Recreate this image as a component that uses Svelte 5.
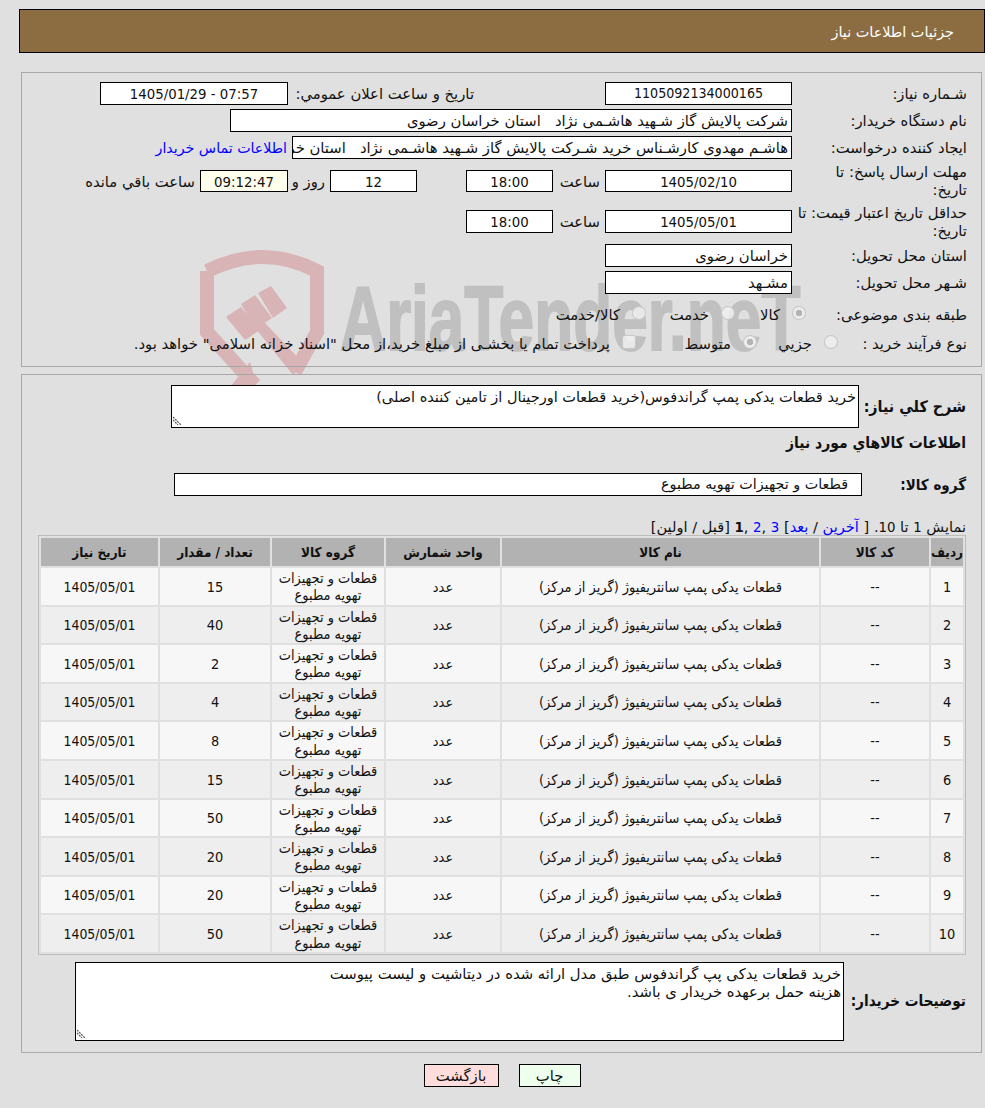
<script>
	const rows = Array.from({ length: 10 }, (_, i) => ({
		n: i + 1,
		qty: [15, 40, 2, 4, 8, 15, 50, 20, 20, 50][i]
	}));
</script>

<div class="page">
	<div class="watermark" aria-hidden="true">
		<svg class="shield" viewBox="0 0 126 137" width="126" height="137">
			<path class="band" d="M7 21 Q36 7 62 7 Q90 7 117 21 V82 L95 122 M7 21 V82 L55 135" />
			<path d="M26 67 L41 57 L60 80 L45 90 Z M58 43 L71 36 L87 58 L73 68 Z M41 54 L55 45 L72 68 L65 73 L105 115 L93 125 L55 78 Z M50 112 L57 137 L30 137 Z" />
		</svg>
		<span class="mark">AriaTender.neT</span>
	</div>

	<header class="title">جزئیات اطلاعات نیاز</header>

	<section class="panel top">
		<div class="row">
			<span class="label">شـماره نیاز:</span>
			<span class="box num digits long">1105092134000165</span>
			<span class="label second">تاریخ و ساعت اعلان عمومي:</span>
			<span class="box stamp digits">07:57 - 1405/01/29</span>
		</div>
		<div class="row">
			<span class="label">نام دستگاه خریدار:</span>
			<span class="box left wide1">شرکت پالایش گاز شـهید هاشـمی نژاد &nbsp; استان خراسان رضوی</span>
		</div>
		<div class="row">
			<span class="label">ایجاد کننده درخواست:</span>
			<span class="box left wide2">هاشـم مهدوی کارشـناس خرید شـرکت پالایش گاز شـهید هاشـمی نژاد &nbsp; استان خراسان رضوی</span>
			<a class="link" href="#contact">اطلاعات تماس خریدار</a>
		</div>
		<div class="row r4">
			<span class="label">مهلت ارسال پاسخ: تا<br />تاریخ:</span>
			<span class="box num digits">1405/02/10</span>
			<span class="unit hour">ساعت</span>
			<span class="box short digits">18:00</span>
			<span class="box days digits">12</span>
			<span class="unit and">روز و</span>
			<span class="box short clock digits">09:12:47</span>
			<span class="unit">ساعت باقي مانده</span>
		</div>
		<div class="row r5">
			<span class="label">حداقل تاریخ اعتبار قیمت: تا تاریخ:</span>
			<span class="box num digits">1405/05/01</span>
			<span class="unit hour">ساعت</span>
			<span class="box short digits">18:00</span>
		</div>
		<div class="row">
			<span class="label">استان محل تحویل:</span>
			<span class="box num left">خراسان رضوی</span>
		</div>
		<div class="row">
			<span class="label">شـهر محل تحویل:</span>
			<span class="box num left">مشـهد</span>
		</div>
		<div class="row r8">
			<span class="label l8">طبقه بندی موضوعی:</span>
			<span class="radio on"></span><span class="opt w57">کالا</span>
			<span class="radio"></span><span class="opt w75">خدمت</span>
			<span class="radio"></span><span class="opt">کالا/خدمت</span>
		</div>
		<div class="row r9">
			<span class="label l9">نوع فرآیند خرید :</span>
			<span class="radio"></span><span class="opt w67">جزيي</span>
			<span class="radio on"></span><span class="opt w107">متوسط</span>
			<span class="check"></span><span class="opt">پرداخت تمام یا بخشـی از مبلغ خرید،از محل "اسناد خزانه اسلامی" خواهد بود.</span>
		</div>
	</section>

	<section class="panel bottom">
		<div class="need">
			<b class="head">شرح كلي نياز:</b>
			<div class="area need-area">
				خرید قطعات یدکی پمپ گراندفوس(خرید قطعات اورجینال از تامین کننده اصلی)
				<svg class="grip" viewBox="0 0 9 9" width="9" height="9"><path d="M0 1 L8 9 M0 4 L5 9" /></svg>
			</div>
		</div>
		<b class="head goods">اطلاعات كالاهاي مورد نياز</b>
		<div class="group">
			<b class="head">گروه کالا:</b>
			<span class="box group-box">قطعات و تجهیزات تهویه مطبوع</span>
		</div>
		<div class="pager">
			نمایش <span class="digits">1</span> تا <span class="digits">10</span>. [ <a href="#last">آخرین</a> / <a href="#next">بعد</a>] <a class="digits" href="#p3">3</a> ,<a class="digits" href="#p2">2</a> ,<b class="digits">1</b> [قبل / اولین]
		</div>
		<table>
			<thead>
				<tr>
					<th class="c-n">ردیف</th>
					<th class="c-code">کد کالا</th>
					<th class="c-name">نام کالا</th>
					<th class="c-unit">واحد شمارش</th>
					<th class="c-group">گروه کالا</th>
					<th class="c-qty">تعداد / مقدار</th>
					<th>تاریخ نیاز</th>
				</tr>
			</thead>
			<tbody>
				{#each rows as row}
					<tr>
						<td>{row.n}</td>
						<td>--</td>
						<td>قطعات یدکی پمپ سانتریفیوژ (گریز از مرکز)</td>
						<td>عدد</td>
						<td>قطعات و تجهیزات<br />تهویه مطبوع</td>
						<td>{row.qty}</td>
						<td class="date">1405/05/01</td>
					</tr>
				{/each}
			</tbody>
		</table>
		<div class="notes">
			<b class="head">توضیحات خریدار:</b>
			<div class="area notes-area">
				خرید قطعات یدکی پپ گراندفوس طبق مدل ارائه شده در دیتاشیت و لیست پیوست<br />هزینه حمل برعهده خریدار ی باشد.
				<svg class="grip" viewBox="0 0 9 9" width="9" height="9"><path d="M0 1 L8 9 M0 4 L5 9" /></svg>
			</div>
		</div>
	</section>

	<div class="actions">
		<button class="print">چاپ</button>
		<button class="back">بازگشت</button>
	</div>
</div>

<style>
	:global(body) {
		background: #e0e0e0;
	}
	.page {
		direction: rtl;
		position: relative;
		height: 1108px;
		box-sizing: border-box;
		padding: 9px 0 0 0;
		overflow: hidden;
		font-family: "DejaVu Sans", sans-serif;
		font-size: 14.8px;
		color: #111;
	}
	.digits {
		font-family: "DejaVu Sans Condensed", "DejaVu Sans", sans-serif;
		font-size: 14.8px;
	}
	.long {
		font-size: 14.1px;
	}
	.watermark {
		position: absolute;
		left: 200px;
		top: 250px;
		width: 720px;
		height: 137px;
		direction: ltr;
	}
	.shield {
		position: absolute;
		left: 0;
		top: 0;
		fill: #d9b4b6;
	}
	.band {
		fill: none;
		stroke: #d9b4b6;
		stroke-width: 14;
	}
	.mark {
		position: absolute;
		left: 140px;
		top: 19px;
		font-family: "Liberation Sans", sans-serif;
		font-weight: bold;
		font-size: 90px;
		line-height: 100px;
		color: #c0c0c0;
		-webkit-text-stroke: 2px #c0c0c0;
		white-space: nowrap;
		transform: scaleX(0.71);
		transform-origin: left center;
	}
	.title {
		position: relative;
		margin-left: 19px;
		height: 42px;
		line-height: 44px;
		background: #8c6d42;
		border: 1px solid #000;
		color: #fff;
		padding-right: 30px;
		font-size: 14.4px;
	}
	.panel {
		position: relative;
		margin: 0 3px 0 21px;
		border: 1px solid #a8a8a8;
		box-sizing: border-box;
	}
	.top {
		margin-top: 19px;
		height: 295px;
		padding: 9px 14px 0 0;
	}
	.bottom {
		margin-top: 7px;
		height: 679px;
		padding: 10px 15px 0 15px;
	}
	.row {
		display: flex;
		align-items: center;
		height: 23px;
		margin-bottom: 4px;
	}
	.r4 {
		height: 22px;
		margin-top: 11px;
		margin-bottom: 18px;
	}
	.r5 {
		margin-bottom: 11px;
	}
	.r8 {
		margin-top: 9px;
		margin-bottom: 6px;
	}
	.label {
		flex: none;
		width: 175px;
		line-height: 18px;
	}
	.l8 {
		width: 161px;
	}
	.l9 {
		width: 129px;
	}
	.second {
		width: 186px;
		margin-right: 131px;
	}
	.box {
		flex: none;
		box-sizing: border-box;
		height: 100%;
		line-height: 21px;
		background: #fff;
		border: 1px solid #000;
		text-align: center;
		overflow: hidden;
		white-space: nowrap;
	}
	.num {
		width: 187px;
	}
	.stamp {
		width: 188px;
	}
	.left {
		text-align: right;
		padding-right: 3px;
	}
	.wide1 {
		width: 562px;
	}
	.wide2 {
		width: 500px;
	}
	.link {
		margin-right: 5px;
		color: #00f;
		text-decoration: none;
		white-space: nowrap;
		font-size: 14.2px;
	}
	.unit {
		flex: none;
		box-sizing: border-box;
		padding: 0 5px;
		white-space: nowrap;
	}
	.hour {
		width: 52px;
	}
	.and {
		width: 42px;
	}
	.short {
		width: 87px;
	}
	.days {
		width: 87px;
		margin-right: 49px;
	}
	.clock {
		width: 88px;
		background: #ffe;
	}
	.radio,
	.check {
		flex: none;
		box-sizing: border-box;
		width: 14px;
		height: 14px;
		margin-top: -4px;
		border-radius: 50%;
		border: 1px solid rgba(190, 190, 190, 0.8);
		background: rgba(238, 238, 238, 0.85);
	}
	.radio.on {
		background: radial-gradient(circle, #b4b4b4 0 3px, #ececec 3.5px);
	}
	.check {
		border-radius: 3px;
	}
	.opt {
		flex: none;
		box-sizing: border-box;
		padding-right: 12px;
		white-space: nowrap;
	}
	.w57 {
		width: 57px;
	}
	.w75 {
		width: 75px;
	}
	.w67 {
		width: 67px;
	}
	.w107 {
		width: 107px;
	}
	.head {
		flex: none;
		font-family: "DejaVu Sans Condensed", "DejaVu Sans", sans-serif;
		font-size: 15.5px;
		white-space: nowrap;
	}
	.need {
		display: flex;
		align-items: center;
		gap: 5px;
		height: 43px;
	}
	.need .head {
		width: 102px;
		font-size: 15.9px;
	}
	.area {
		position: relative;
		box-sizing: border-box;
		background: #fff;
		border: 1px solid #000;
		padding: 2px;
		line-height: 18px;
	}
	.grip {
		position: absolute;
		left: 1px;
		bottom: 2px;
		fill: none;
		stroke: #555;
		stroke-width: 1.3;
		stroke-dasharray: 2 1;
	}
	.need-area {
		width: 688px;
		height: 43px;
		font-size: 14.5px;
	}
	.goods {
		display: block;
		margin-top: 3px;
		height: 24px;
		line-height: 24px;
	}
	.group {
		display: flex;
		align-items: center;
		height: 23px;
		margin-top: 18px;
	}
	.group .head {
		width: 104px;
		font-size: 15px;
	}
	.group-box {
		width: 688px;
		text-align: right;
		padding-right: 13px;
		font-size: 14.3px;
	}
	.pager {
		margin-top: 22px;
		height: 17px;
		line-height: 17px;
		font-size: 14.6px;
	}
	.pager a {
		color: #00f;
		text-decoration: none;
	}
	table {
		width: 928px;
		box-sizing: border-box;
		border: 1px solid #bcbcbc;
		border-collapse: separate;
		border-spacing: 2px;
		table-layout: fixed;
		font-family: "DejaVu Sans Condensed", "DejaVu Sans", sans-serif;
		font-size: 14.4px;
	}
	th {
		height: 28px;
		padding: 0;
		background: #b2b2b2;
		font-size: 13.4px;
		font-weight: bold;
	}
	td {
		padding: 2px 1px 0;
		line-height: 17.3px;
		text-align: center;
	}
	.date {
		font-size: 13.9px;
	}
	tbody tr:nth-child(odd) td {
		background: #f7f7f7;
	}
	tbody tr:nth-child(even) td {
		background: #eee;
	}
	.c-n {
		width: 32px;
	}
	.c-code {
		width: 108px;
	}
	.c-name {
		width: 317px;
	}
	.c-unit {
		width: 114px;
	}
	.c-group {
		width: 112px;
	}
	.c-qty {
		width: 110px;
	}
	.notes {
		display: flex;
		align-items: center;
		gap: 5px;
		margin-top: 7px;
	}
	.notes .head {
		width: 117px;
		font-size: 15.2px;
	}
	.notes-area {
		width: 769px;
		height: 79px;
	}
	.actions {
		display: flex;
		justify-content: center;
		gap: 20px;
		margin-top: 11px;
		padding-left: 19px;
	}
	button {
		box-sizing: border-box;
		height: 23px;
		padding: 0;
		border: 1px solid #000;
		font: inherit;
		color: #111;
	}
	.back {
		width: 75px;
		background: #fdd;
	}
	.print {
		width: 62px;
		background: #efe;
	}
</style>
